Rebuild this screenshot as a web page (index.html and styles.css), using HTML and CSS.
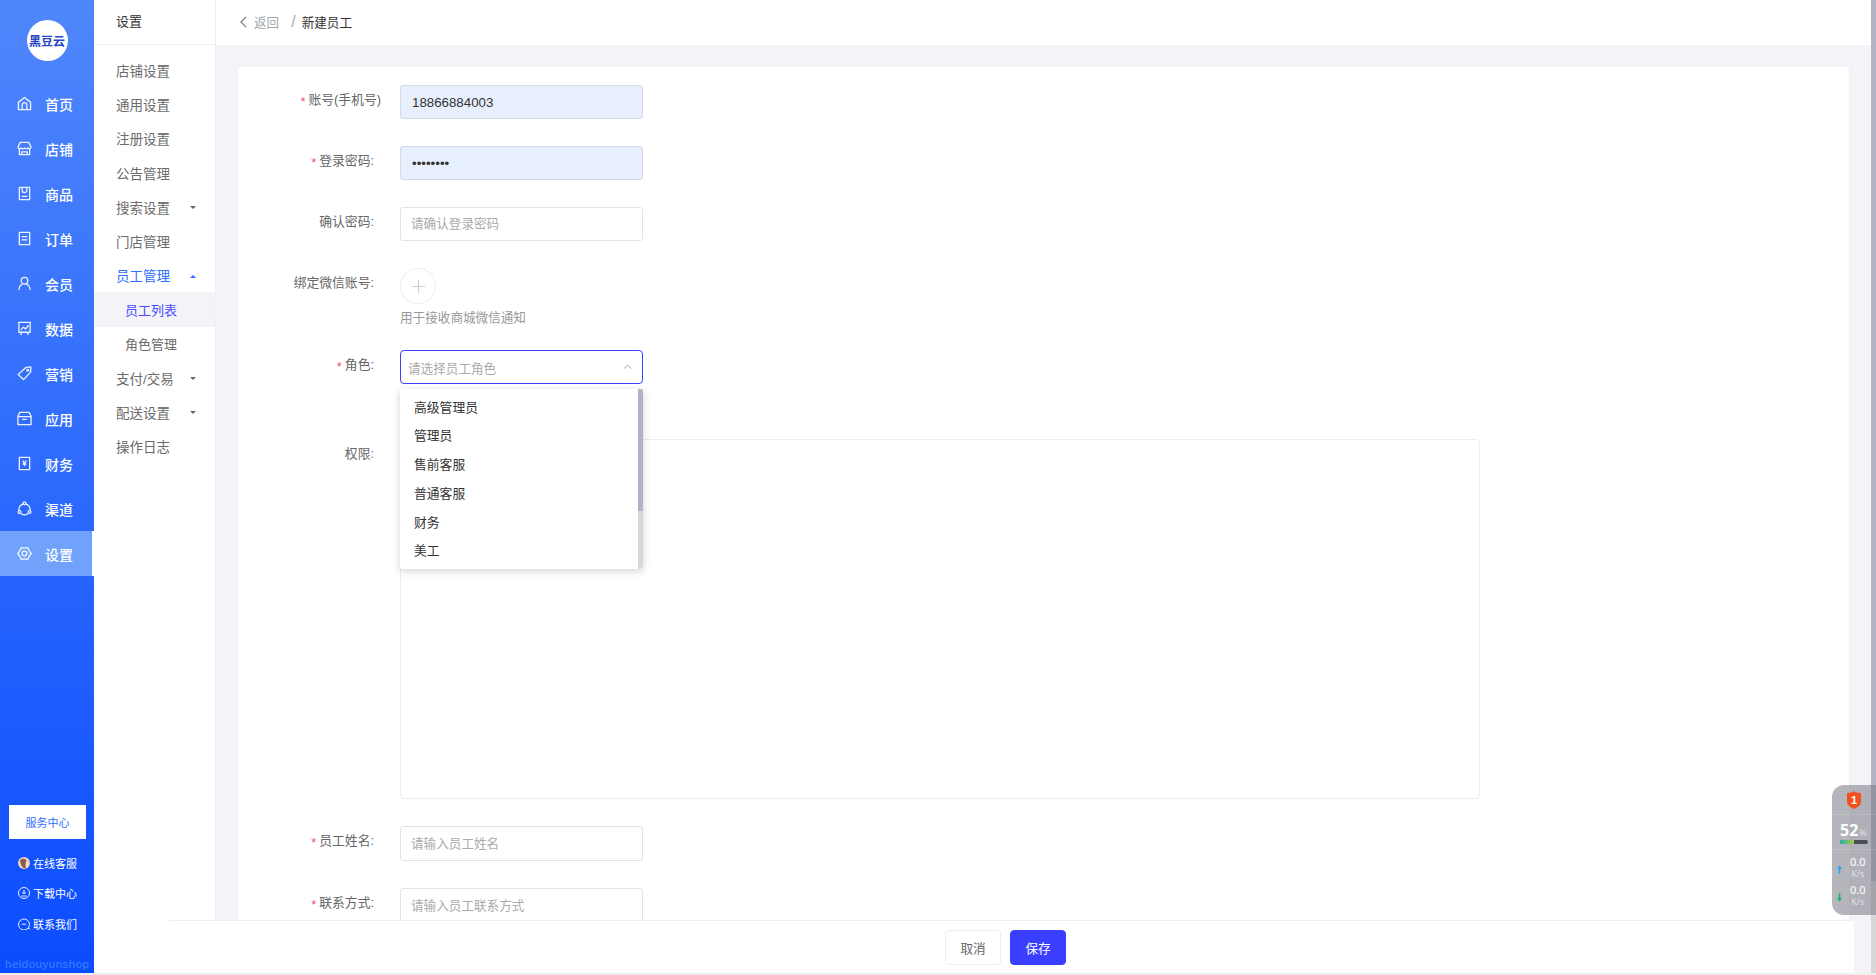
FILE: index.html
```html
<!DOCTYPE html>
<html lang="zh-CN">
<head>
<meta charset="utf-8">
<title>新建员工</title>
<link rel="stylesheet" href="styles.css">
</head>
<body>
<div class="app">
  <aside class="sidebar">
    <div class="logo"><span>黑豆云</span></div>
    <nav class="menu">
      <a class="menu-item"><svg viewBox="0 0 16 16"><path d="M1.500 6.800 8 1.500l6.500 5.300v7.700h-13z"/><path d="M5.500 14.500V9.500a2.500 2.500 0 0 1 5 0v5"/></svg><span>首页</span></a>
      <a class="menu-item"><svg viewBox="0 0 16 16"><path d="M3.500 1.500h9L15 6.500a2 2 0 0 1-3.500 1 2.300 2.300 0 0 1-3.500 0 2.300 2.300 0 0 1-3.500 0A2 2 0 0 1 1 6.500z"/><path d="M2.500 8.500v6h11v-6M5 14.500v-3h6v3"/></svg><span>店铺</span></a>
      <a class="menu-item"><svg viewBox="0 0 16 16"><path d="M2.500 1.500h11v13h-11z"/><path d="M5.500 2v2.500a2.500 2.500 0 0 0 5 0V2M5 11h6"/></svg><span>商品</span></a>
      <a class="menu-item"><svg viewBox="0 0 16 16"><path d="M2.500 1.500h11v13h-11z"/><path d="M5 6h6M5 9.500h6"/></svg><span>订单</span></a>
      <a class="menu-item"><svg viewBox="0 0 16 16"><circle cx="8" cy="5" r="3.500"/><path d="M2 15c.3-3.800 2.500-6.500 4.500-6.700M14 15c-.3-3.800-2.500-6.500-4.500-6.700"/></svg><span>会员</span></a>
      <a class="menu-item"><svg viewBox="0 0 16 16"><path d="M1 1.500h14M2 1.500v10.500h12V1.500M4 9.500l3-3 2 2 3.500-4M5 12l-1 3M11 12l1 3"/></svg><span>数据</span></a>
      <a class="menu-item"><svg viewBox="0 0 16 16"><path d="M9.500 1.500 14.800 1l-.3 5.500-7.500 8L1.200 9z"/><circle cx="11.500" cy="4.500" r="1"/></svg><span>营销</span></a>
      <a class="menu-item"><svg viewBox="0 0 16 16"><path d="M3 1.500h10l2 4v9H1v-9zM1 6h14M5.500 9h5"/></svg><span>应用</span></a>
      <a class="menu-item"><svg viewBox="0 0 16 16"><path d="M2.500 1.500h11v13h-11z"/><path d="M6 5l2 2.500L10 5M8 7.500V11M6 8.500h4"/></svg><span>财务</span></a>
      <a class="menu-item"><svg viewBox="0 0 16 16"><path d="M9.400 3.200A6.200 6.200 0 0 1 13.900 10M11.800 13.400a6.200 6.200 0 0 1-7.600 0M2.100 10A6.200 6.200 0 0 1 6.600 3.200"/><circle cx="8" cy="2.400" r="1.500"/><circle cx="2.700" cy="11.800" r="1.500"/><circle cx="13.300" cy="11.800" r="1.500"/></svg><span>渠道</span></a>
      <a class="menu-item is-active"><svg viewBox="0 0 16 16"><path d="M15.200 8 13 10.900l-1.400 3.340L8 13.800l-3.600.44L3 10.900.8 8 3 5.100l1.400-3.340L8 2.200l3.600-.44L13 5.100z"/><circle cx="8" cy="8" r="2.500"/></svg><span>设置</span></a>
    </nav>
    <div class="service">
      <a class="service-btn">服务中心</a>
      <a class="service-link"><svg class="avatar" viewBox="0 0 12 12"><circle cx="6" cy="6" r="6" fill="#f2d5c4"/><path d="M2 3.500C3.500 1 8 1 8.500 4 7.500 5 7 7 8 11 5 12 3 9 2 3.500z" fill="#8a5a4a"/></svg><span>在线客服</span></a>
      <a class="service-link"><svg viewBox="0 0 12 12"><circle cx="6" cy="6" r="5.500"/><path d="M6 2.800v4M4.300 5.200 6 6.900l1.700-1.700M3.500 9h5"/></svg><span>下载中心</span></a>
      <a class="service-link"><svg viewBox="0 0 12 12"><path d="M10 10.300A5.500 5.500 0 1 1 11.500 6.200c0 1.200-.4 2.200-1 3l.8 1.600z"/><path d="M3.800 6.200h4.400"/></svg><span>联系我们</span></a>
    </div>
    <div class="brand">heidouyunshop</div>
  </aside>

  <nav class="subnav">
    <div class="subnav-title">设置</div>
    <ul class="subnav-list">
      <li class="subnav-item">店铺设置</li>
      <li class="subnav-item">通用设置</li>
      <li class="subnav-item">注册设置</li>
      <li class="subnav-item">公告管理</li>
      <li class="subnav-item">搜索设置<i class="caret"></i></li>
      <li class="subnav-item">门店管理</li>
      <li class="subnav-item is-open">员工管理<i class="caret caret-up"></i></li>
      <li class="subnav-item is-child is-current">员工列表</li>
      <li class="subnav-item is-child">角色管理</li>
      <li class="subnav-item">支付/交易<i class="caret"></i></li>
      <li class="subnav-item">配送设置<i class="caret"></i></li>
      <li class="subnav-item">操作日志</li>
    </ul>
  </nav>

  <main class="main">
    <header class="topbar">
      <svg class="back-icon" viewBox="0 0 8 14"><path d="M7 1 1 7l6 6"/></svg>
      <span class="back">返回</span>
      <span class="sep">/</span>
      <span class="crumb">新建员工</span>
    </header>
    <div class="content">
      <form class="card">
        <div class="row">
          <label class="label label-wide"><em>*</em>账号(手机号)</label>
          <input class="input is-filled" value="18866884003">
        </div>
        <div class="row">
          <label class="label"><em>*</em>登录密码:</label>
          <input class="input is-filled" type="password" value="12345678">
        </div>
        <div class="row">
          <label class="label">确认密码:</label>
          <input class="input" placeholder="请确认登录密码">
        </div>
        <div class="row row-upload">
          <label class="label">绑定微信账号:</label>
          <div>
            <div class="upload"><svg viewBox="0 0 16 16"><path d="M8 1v14M1 8h14"/></svg></div>
            <p class="hint">用于接收商城微信通知</p>
          </div>
        </div>
        <div class="row row-select">
          <label class="label"><em>*</em>角色:</label>
          <div class="select-wrap">
            <div class="select">
              <span>请选择员工角色</span>
              <svg viewBox="0 0 10 6"><path d="M1 5l4-4 4 4"/></svg>
            </div>
            <div class="dropdown">
              <ul class="options">
                <li>高级管理员</li>
                <li>管理员</li>
                <li>售前客服</li>
                <li>普通客服</li>
                <li>财务</li>
                <li>美工</li>
              </ul>
              <div class="dropdown-track"><div class="dropdown-thumb"></div></div>
            </div>
          </div>
        </div>
        <div class="row">
          <label class="label">权限:</label>
          <div class="perm-box"></div>
        </div>
        <div class="row row-tall">
          <label class="label"><em>*</em>员工姓名:</label>
          <input class="input" placeholder="请输入员工姓名">
        </div>
        <div class="row row-tall">
          <label class="label"><em>*</em>联系方式:</label>
          <input class="input" placeholder="请输入员工联系方式">
        </div>
      </form>
    </div>
  </main>

  <div class="page-scroll"><div class="page-thumb"></div></div>

  <footer class="footer">
    <button class="btn" type="button">取消</button>
    <button class="btn btn-primary" type="button">保存</button>
  </footer>

  <aside class="widget">
    <div class="widget-shield">
      <svg viewBox="0 0 14 18"><path d="M7 0l2 1.500 5 .5v9c0 3-3 5-7 7-4-2-7-4-7-7V2l5-.5z" fill="#f4501e"/><text x="7" y="12.500" text-anchor="middle">1</text></svg>
    </div>
    <div class="widget-cpu">
      <div class="cpu-value">52<small>%</small></div>
      <div class="cpu-bar"><div class="cpu-fill"></div></div>
    </div>
    <div class="widget-net">
      <div class="net-row">
        <svg viewBox="0 0 6 10"><path d="M3 0 6 4H4v6H2V4H0z" fill="#23a6f0"/></svg>
        <div class="net-text"><b>0.0</b><span>K/s</span></div>
      </div>
      <div class="net-row">
        <svg viewBox="0 0 6 10"><path d="M3 10 6 6H4V0H2v6H0z" fill="#12b76a"/></svg>
        <div class="net-text"><b>0.0</b><span>K/s</span></div>
      </div>
    </div>
  </aside>
</div>
</body>
</html>
```
FILE: styles.css
```css
* { box-sizing: border-box; }
html, body { height: 100%; }
body {
  margin: 0;
  overflow: hidden;
  background: #eeeef0;
  font-family: "Liberation Sans", "Noto Sans CJK SC", sans-serif;
  font-size: 13px;
  color: #333;
}
ul { list-style: none; margin: 0; padding: 0; }
p { margin: 0; }

.app {
  position: relative;
  display: flex;
  height: 973px;
  overflow: hidden;
}

/* primary sidebar */
.sidebar {
  width: 94px;
  flex: none;
  display: flex;
  flex-direction: column;
  background: linear-gradient(180deg, #4f87fb 0%, #0b4cff 100%);
  color: #fff;
}
.logo {
  width: 41px;
  height: 41px;
  margin: 20px auto 20px;
  border-radius: 50%;
  background: #fff;
  display: flex;
  align-items: center;
  justify-content: center;
}
.logo span { font-size: 12px; font-weight: 700; color: #2a45c9; white-space: nowrap; }
.menu { display: flex; flex-direction: column; }
.menu-item {
  height: 45px;
  display: flex;
  align-items: center;
  padding-left: 17px;
  font-size: 14px;
  font-weight: 500;
}
.menu-item svg {
  width: 15px;
  height: 15px;
  margin-right: 13px;
  fill: none;
  stroke: rgba(255, 255, 255, .9);
  stroke-width: 1.400;
  stroke-linejoin: round;
  flex: none;
}
.menu-item.is-active {
  background: #70a2fc;
  border-right: 2px solid #fff;
}
.service {
  margin-top: auto;
  padding: 0 8px 0 9px;
  display: flex;
  flex-direction: column;
  align-items: stretch;
}
.service-btn {
  height: 34px;
  margin-bottom: 9px;
  background: #fff;
  color: #2f6dff;
  font-size: 11px;
  display: flex;
  align-items: center;
  justify-content: center;
}
.service-link {
  height: 30.500px;
  display: flex;
  align-items: center;
  padding-left: 9px;
  font-size: 11px;
  white-space: nowrap;
}
.service-link svg {
  width: 12px;
  height: 12px;
  margin-right: 3px;
  fill: none;
  stroke: rgba(255, 255, 255, .9);
  stroke-width: 1;
  flex: none;
}
.service-link svg.avatar { stroke: none; }
.brand {
  margin-top: 17px;
  height: 17px;
  line-height: 17px;
  padding-left: 5px;
  font-size: 11.500px;
  letter-spacing: .5px;
  color: #3a84ff;
  white-space: nowrap;
}

/* secondary nav */
.subnav {
  width: 122px;
  flex: none;
  background: #fff;
  border-right: 1px solid #f0f0f4;
  display: flex;
  flex-direction: column;
}
.subnav-title {
  height: 45px;
  line-height: 44px;
  padding-left: 22px;
  border-bottom: 1px solid #f0f0f4;
  font-size: 13px;
  color: #333;
}
.subnav-list { padding-top: 8px; }
.subnav-item {
  height: 34.200px;
  padding: 0 19px 0 22px;
  display: flex;
  align-items: center;
  justify-content: space-between;
  font-size: 13.500px;
  color: #6b6b6b;
  white-space: nowrap;
}
.subnav-item.is-open { color: #2f6dff; }
.subnav-item.is-child { padding-left: 31px; font-size: 13px; }
.subnav-item.is-current { background: #f3f3f8; color: #4a4aff; }
.caret {
  width: 0;
  height: 0;
  margin-top: 2px;
  border-left: 3.500px solid transparent;
  border-right: 3.500px solid transparent;
  border-top: 3.500px solid #666;
}
.caret-up {
  border-top: 0;
  border-bottom: 3.500px solid #2f6dff;
}

/* main */
.main {
  flex: 1;
  min-width: 0;
  display: flex;
  flex-direction: column;
  background: #f3f3f8;
}
.topbar {
  height: 45px;
  flex: none;
  background: #fff;
  display: flex;
  align-items: center;
  padding: 0 0 2px 24px;
  font-size: 12.600px;
}
.back-icon {
  width: 7px;
  height: 12px;
  margin-right: 7px;
  fill: none;
  stroke: #777;
  stroke-width: 1.300;
}
.back { color: #a3a8ad; }
.sep { margin: 0 6px 0 12px; color: #aaa; font-size: 16px; font-weight: 300; }
.crumb { color: #333; }
.content {
  flex: 1;
  min-height: 0;
  overflow: hidden;
  padding: 22px 22px 0;
}
.card {
  background: #fff;
  border-radius: 4px;
  padding: 18px 0 60px;
  display: flex;
  flex-direction: column;
}
.row {
  display: flex;
  align-items: flex-start;
  margin-bottom: 27px;
}
.row-upload { margin-bottom: 22px; }
.row-select { margin-bottom: 55px; }
.row-tall .input { height: 35px; }
.label {
  width: 136px;
  flex: none;
  margin-right: 26px;
  line-height: 30px;
  text-align: right;
  font-size: 12.800px;
  color: #666;
  white-space: nowrap;
}
.label-wide { width: 143px; margin-right: 19px; }
.label em {
  display: inline-block;
  vertical-align: -2px;
  margin-right: 3px;
  font-style: normal;
  color: #f0527a;
}
.input {
  width: 243px;
  height: 34px;
  padding: 0 10px;
  border: 1px solid #e3e3e6;
  border-radius: 3px;
  background: #fff;
  outline: none;
  font-family: inherit;
  font-size: 12.600px;
  color: #333;
}
.input::placeholder { color: #aaa; opacity: 1; }
.input.is-filled {
  padding: 0 11px;
  background: #e8effc;
  border-color: #d2daea;
  font-size: 13.300px;
}
.upload {
  width: 36px;
  height: 36px;
  border: 1px dotted #d8d8d8;
  border-radius: 50%;
  display: flex;
  align-items: center;
  justify-content: center;
}
.upload svg {
  width: 15px;
  height: 15px;
  fill: none;
  stroke: #cfcfcf;
  stroke-width: 1.200;
}
.hint {
  margin-top: 4px;
  line-height: 20px;
  font-size: 12.600px;
  color: #999;
  white-space: nowrap;
}
.select-wrap { position: relative; width: 243px; }
.select {
  height: 34px;
  padding: 0 10px 0 7px;
  border: 1px solid #3a3fff;
  border-radius: 4px;
  display: flex;
  align-items: center;
  justify-content: space-between;
  font-size: 12.600px;
  color: #aaa;
}
.select svg {
  width: 9px;
  height: 6px;
  fill: none;
  stroke: #999;
  stroke-width: 1;
}
.dropdown {
  position: absolute;
  top: 39px;
  left: 0;
  width: 243px;
  height: 180px;
  z-index: 5;
  display: flex;
  background: #fff;
  border-radius: 3px;
  box-shadow: 0 2px 8px rgba(0, 0, 0, .18);
  overflow: hidden;
}
.options {
  flex: 1;
  padding-top: 4.500px;
}
.options li {
  height: 28.800px;
  line-height: 28.800px;
  padding-left: 14px;
  font-size: 12.800px;
  color: #333;
}
.dropdown-track { width: 5px; background: #d8d8d8; }
.dropdown-thumb { height: 122px; background: #b1b2c6; }
.perm-box {
  width: 1080px;
  height: 360px;
  border: 1px solid #eeeeee;
  border-radius: 4px;
}

/* page scrollbar */
.page-scroll {
  width: 5px;
  flex: none;
  background: #d8d8d8;
}
.page-thumb { height: 881px; background: #b3b3c7; }

/* footer */
.footer {
  position: absolute;
  left: 167px;
  right: 22px;
  bottom: 0;
  height: 53px;
  z-index: 6;
  background: #fff;
  border-top: 1px solid #eeeeee;
  border-radius: 3px 3px 0 0;
  display: flex;
  align-items: center;
  justify-content: center;
  gap: 9px;
  padding: 1px 10px 0 0;
}
.btn {
  width: 56px;
  height: 35px;
  padding: 0;
  border: 1px solid #eeeeee;
  border-radius: 4px;
  background: #fff;
  font-family: inherit;
  font-size: 12.600px;
  color: #666;
}
.btn-primary {
  background: #3a3fff;
  border-color: #3a3fff;
  color: #fff;
}

/* floating meter */
.widget {
  position: absolute;
  right: 0;
  top: 785px;
  width: 44px;
  height: 130px;
  z-index: 7;
  border-radius: 12px 0 0 12px;
  background: rgba(120, 122, 132, .55);
  display: flex;
  flex-direction: column;
  color: #fff;
}
.widget-shield {
  height: 30px;
  flex: none;
  display: flex;
  justify-content: center;
  align-items: center;
  border-bottom: 1px solid rgba(255, 255, 255, .12);
}
.widget-shield svg { width: 14px; height: 18px; }
.widget-shield text { font: 700 11px "Liberation Sans", sans-serif; fill: #fff; }
.widget-cpu {
  height: 35px;
  flex: none;
  padding: 7px 8px 0 8px;
  border-bottom: 1px solid rgba(255, 255, 255, .12);
}
.cpu-value {
  height: 17px;
  font: 700 16px/17px "Noto Sans", sans-serif;
  white-space: nowrap;
}
.cpu-value small {
  font-size: 9px;
  font-weight: 400;
  color: rgba(255, 255, 255, .6);
  margin-left: 1px;
}
.cpu-bar {
  height: 4px;
  margin-top: 1px;
  border-radius: 2px;
  background: #4a4c58;
  overflow: hidden;
}
.cpu-fill {
  width: 50%;
  height: 100%;
  background: linear-gradient(90deg, #26b5b0, #a6c940);
}
.widget-net {
  flex: 1;
  display: flex;
  flex-direction: column;
  padding-top: 4px;
}
.net-row {
  height: 28px;
  display: flex;
  align-items: center;
  padding-left: 5px;
}
.net-row svg { width: 5px; height: 9px; margin: 3px 8px 0 0; flex: none; }
.net-text {
  display: flex;
  flex-direction: column;
  line-height: 12px;
  text-align: center;
  font-family: "Noto Sans", sans-serif;
}
.net-text b { font-size: 11px; font-weight: 400; }
.net-text span { font-size: 9px; color: rgba(255, 255, 255, .6); }
```
